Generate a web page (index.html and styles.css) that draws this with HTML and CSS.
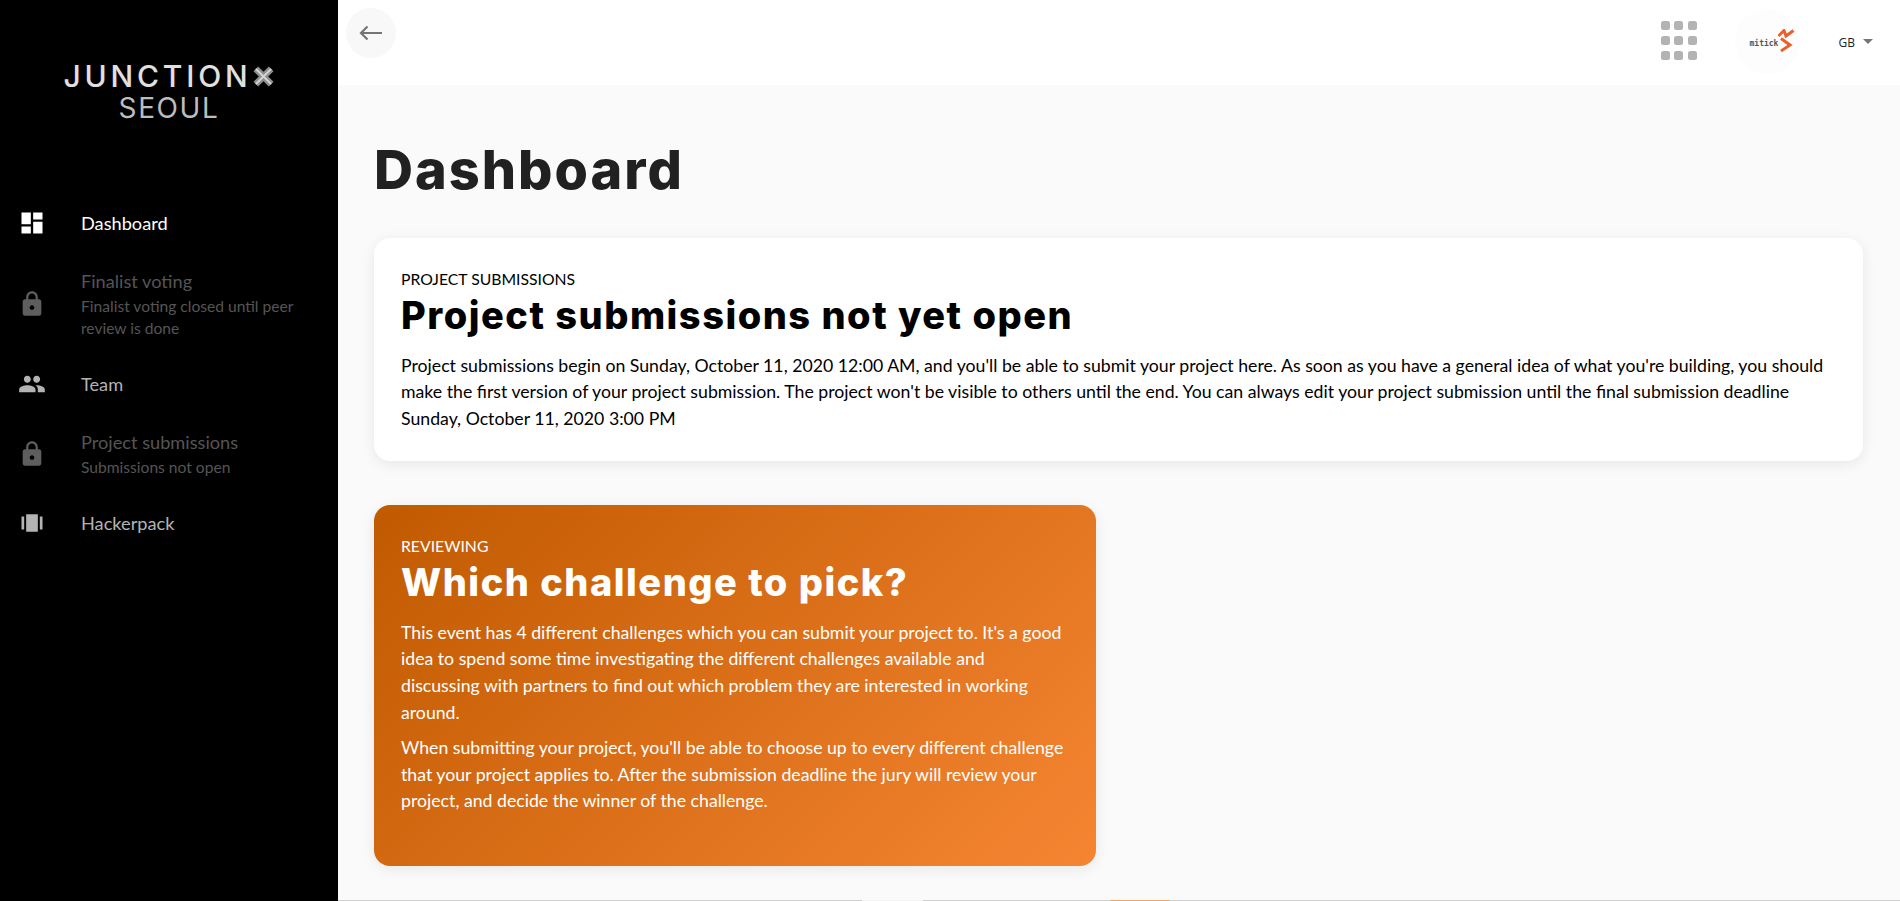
FILE: index.html
```html
<!DOCTYPE html>
<html lang="en">
<head>
  <meta charset="UTF-8" />
  <title>Dashboard</title>
  <link rel="stylesheet" href="styles.css">
</head>
<body>
  <aside class="sidebar">
    <div class="logo">
      <div class="logo-top">JUNCTION<svg class="logo-x" viewBox="0 0 24 24" width="23" height="23"><path d="M4 4 L20 20 M20 4 L4 20" stroke="#8f8f8f" stroke-width="7" fill="none"/><path d="M4 4 L20 20 M20 4 L4 20" stroke="#d8d8d8" stroke-width="2" fill="none"/></svg></div>
      <div class="logo-bottom">SEOUL</div>
    </div>
    <nav class="nav">
      <div class="nav-item active">
        <svg class="nav-icon" viewBox="0 0 24 24"><path d="M3 13h8V3H3v10zm0 8h8v-6H3v6zm10 0h8V11h-8v10zm0-18v6h8V3h-8z"/></svg>
        <div class="nav-text"><div class="nav-title">Dashboard</div></div>
      </div>
      <div class="nav-item locked">
        <svg class="nav-icon" viewBox="0 0 24 24"><path d="M18 8h-1V6c0-2.76-2.24-5-5-5S7 3.24 7 6v2H6c-1.1 0-2 .9-2 2v10c0 1.1.9 2 2 2h12c1.1 0 2-.9 2-2V10c0-1.1-.9-2-2-2zm-6 9c-1.1 0-2-.9-2-2s.9-2 2-2 2 .9 2 2-.9 2-2 2zm3.1-9H8.9V6c0-1.71 1.39-3.1 3.1-3.1 1.71 0 3.1 1.39 3.1 3.1v2z"/></svg>
        <div class="nav-text">
          <div class="nav-title">Finalist voting</div>
          <div class="nav-sub">Finalist voting closed until peer review is done</div>
        </div>
      </div>
      <div class="nav-item">
        <svg class="nav-icon" viewBox="0 0 24 24"><path d="M16 11c1.66 0 2.99-1.34 2.99-3S17.66 5 16 5c-1.66 0-3 1.34-3 3s1.34 3 3 3zm-8 0c1.66 0 2.99-1.34 2.99-3S9.66 5 8 5C6.34 5 5 6.34 5 8s1.34 3 3 3zm0 2c-2.33 0-7 1.17-7 3.5V19h14v-2.5c0-2.33-4.67-3.5-7-3.5zm8 0c-.29 0-.62.02-.97.05 1.16.84 1.97 1.97 1.97 3.45V19h6v-2.5c0-2.33-4.67-3.5-7-3.5z"/></svg>
        <div class="nav-text"><div class="nav-title">Team</div></div>
      </div>
      <div class="nav-item locked">
        <svg class="nav-icon" viewBox="0 0 24 24"><path d="M18 8h-1V6c0-2.76-2.24-5-5-5S7 3.24 7 6v2H6c-1.1 0-2 .9-2 2v10c0 1.1.9 2 2 2h12c1.1 0 2-.9 2-2V10c0-1.1-.9-2-2-2zm-6 9c-1.1 0-2-.9-2-2s.9-2 2-2 2 .9 2 2-.9 2-2 2zm3.1-9H8.9V6c0-1.71 1.39-3.1 3.1-3.1 1.71 0 3.1 1.39 3.1 3.1v2z"/></svg>
        <div class="nav-text">
          <div class="nav-title">Project submissions</div>
          <div class="nav-sub">Submissions not open</div>
        </div>
      </div>
      <div class="nav-item">
        <svg class="nav-icon" viewBox="0 0 24 24"><path d="M3 6.5h2.3v11H3zM7 4.5h10v15H7zM18.7 6.5H21v11h-2.3z"/></svg>
        <div class="nav-text"><div class="nav-title">Hackerpack</div></div>
      </div>
    </nav>
  </aside>

  <div class="main">
    <header class="topbar">
      <button class="back-btn" type="button">
        <svg viewBox="0 0 24 24" width="24" height="24"><path d="M2 12H23M8.5 5.5L2 12l6.5 6.5" stroke="#757575" stroke-width="2.2" fill="none"/></svg>
      </button>
      <div class="topbar-right">
        <div class="apps-grid">
          <span></span><span></span><span></span>
          <span></span><span></span><span></span>
          <span></span><span></span><span></span>
        </div>
        <div class="partner">
          <span class="partner-name">mitick</span>
          <svg class="partner-mark" viewBox="0 0 17 24" width="17" height="24"><path d="M.5 7L6 1.5 8 7l7.5-5.5M3 9.5l9 6.5-9 6" stroke="#e8602c" stroke-width="3" fill="none"/></svg>
        </div>
        <div class="lang">GB <span class="caret"></span></div>
      </div>
    </header>

    <main class="content">
      <h1 class="page-title">Dashboard</h1>

      <section class="card">
        <div class="card-label">PROJECT SUBMISSIONS</div>
        <h2 class="card-title">Project submissions not yet open</h2>
        <p>Project submissions begin on Sunday, October 11, 2020 12:00 AM, and you'll be able to submit your project here. As soon as you have a general idea of what you're building, you should make the first version of your project submission. The project won't be visible to others until the end. You can always edit your project submission until the final submission deadline Sunday, October 11, 2020 3:00 PM</p>
      </section>

      <section class="card card-orange">
        <div class="card-label">REVIEWING</div>
        <h2 class="card-title">Which challenge to pick?</h2>
        <p>This event has 4 different challenges which you can submit your project to. It's a good idea to spend some time investigating the different challenges available and discussing with partners to find out which problem they are interested in working around.</p>
        <p>When submitting your project, you'll be able to choose up to every different challenge that your project applies to. After the submission deadline the jury will review your project, and decide the winner of the challenge.</p>
      </section>
    </main>

    <div class="next-row-edge"></div>
  </div>
</body>
</html>
```

FILE: styles.css
```css
* {
  box-sizing: border-box;
}

body {
  margin: 0;
  display: flex;
  height: 901px;
  overflow: hidden;
  font-family: Lato, sans-serif;
  background-color: #fafafa;
}

.sidebar {
  width: 338px;
  flex-shrink: 0;
  background-color: #000;
}

.logo {
  height: 195px;
  padding-top: 64px;
  text-align: center;
  font-family: Inter, sans-serif;
}

.logo-top {
  display: flex;
  align-items: center;
  justify-content: center;
  height: 24px;
  color: #e0e0e0;
  font-size: 30px;
  font-weight: 500;
  letter-spacing: 3.8px;
}

.logo-bottom {
  margin-top: 7px;
  color: #bdbdbd;
  font-size: 28px;
  font-weight: 400;
  letter-spacing: 1.6px;
  line-height: 26px;
}

.nav-item {
  display: flex;
  align-items: center;
  min-height: 56px;
  margin-bottom: 9px;
  padding: 0 16px 0 18px;
  color: #b3b3b3;
  fill: #b3b3b3;
}

.nav-item.active {
  color: #fff;
  fill: #fff;
}

.nav-item.locked {
  padding-top: 8px;
  padding-bottom: 8px;
  color: #555;
  fill: #5e5e5e;
}

.nav-icon {
  width: 28px;
  height: 28px;
  flex-shrink: 0;
  margin-right: 35px;
}

.nav-title {
  font-size: 18.2px;
  line-height: 27px;
}

.nav-sub {
  font-size: 15.6px;
  line-height: 22px;
}

.main {
  flex: 1;
  min-width: 0;
  display: flex;
  flex-direction: column;
}

.topbar {
  display: flex;
  align-items: center;
  justify-content: space-between;
  height: 85px;
  flex-shrink: 0;
  padding: 0 27px 0 8px;
  background-color: #fff;
}

.back-btn {
  display: flex;
  align-items: center;
  justify-content: center;
  width: 50px;
  height: 50px;
  margin-bottom: 20px;
  padding: 0;
  border: none;
  border-radius: 50%;
  background-color: #f8f8f8;
}

.topbar-right {
  display: flex;
  align-items: center;
}

.apps-grid {
  display: grid;
  grid-template-columns: repeat(3, 9px);
  grid-template-rows: repeat(3, 9px);
  column-gap: 4.5px;
  row-gap: 6px;
  margin-right: 38px;
  margin-bottom: 4px;
}

.apps-grid span {
  background-color: #b3b3b3;
  border-radius: 2.5px;
}

.partner {
  display: flex;
  align-items: center;
  width: 65px;
  height: 65px;
  margin-right: 39px;
  margin-bottom: 3px;
  padding-left: 15px;
  border-radius: 50%;
  background-color: #fdfdfd;
}

.partner-name {
  margin-top: 4px;
  font-family: "DejaVu Sans Mono", monospace;
  font-size: 8px;
  font-weight: bold;
  color: #555;
}

.lang {
  display: flex;
  align-items: center;
  font-family: "Open Sans", sans-serif;
  font-size: 12px;
  color: #222;
}

.caret {
  width: 0;
  height: 0;
  margin-left: 8px;
  margin-bottom: 3px;
  border-left: 5.5px solid transparent;
  border-right: 5.5px solid transparent;
  border-top: 5.5px solid #757575;
}

.content {
  flex: 1;
  min-height: 0;
  padding: 52px 37px 0 36px;
}

.page-title {
  margin: 0 0 34.5px;
  font-family: Inter, sans-serif;
  font-size: 54px;
  font-weight: 800;
  letter-spacing: 2px;
  line-height: 66px;
  color: #212121;
}

.card {
  height: 223px;
  margin-bottom: 44px;
  padding: 29px 27px 0;
  border-radius: 16px;
  background-color: #fff;
  box-shadow: 0 3px 14px rgba(0, 0, 0, 0.08);
  color: #000;
}

.card-orange {
  width: 722px;
  height: 361px;
  color: #fff;
  background: linear-gradient(135deg, #c05a00, #f68532);
}

.card-orange p {
  max-width: 664px;
}

.card-label {
  font-size: 15.75px;
  line-height: 24px;
}

.card-title {
  margin: 0 0 14px;
  font-family: Inter, sans-serif;
  font-size: 38px;
  font-weight: 800;
  letter-spacing: 1.5px;
  line-height: 48px;
}

.card p {
  margin-top: 0;
  margin-bottom: 8.5px;
  font-size: 17.7px;
  line-height: 26.7px;
}

/* top pixel of the next row of cards, cut off by the window */
.next-row-edge {
  height: 1px;
  flex-shrink: 0;
  background: linear-gradient(90deg, #cfcfcf 524px, #f4f4f4 524px, #f4f4f4 585px, #cfcfcf 585px, #cfcfcf 772px, #f0a868 772px, #f0a868 832px, #cfcfcf 832px);
}
```
